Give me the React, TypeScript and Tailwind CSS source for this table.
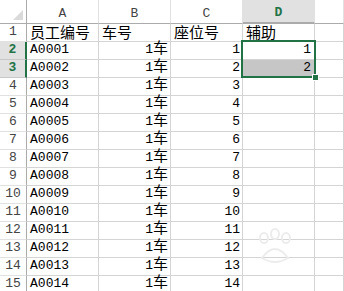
import React from 'react';

const rows = Array.from({ length: 15 }, (_, i) => ({
  id: `A${String(i + 1).padStart(4, '0')}`,
  car: '1车',
  seat: String(i + 1),
  aux: i === 0 ? '1' : i === 1 ? '2' : '',
}));

// latin glyphs in mono, CJK glyphs in Noto CJK
function Txt({ text }: { text: string }) {
  return (
    <span className="whitespace-nowrap leading-[16px]">
      {text.split('').map((ch, i) =>
        ch.charCodeAt(0) > 255 ? (
          <span key={i} className="font-['Noto_Sans_CJK_SC',sans-serif] text-[15px] leading-[16px]">
            {ch}
          </span>
        ) : (
          <span key={i} className="font-['Liberation_Mono',monospace] text-[13px] leading-[16px]">
            {ch}
          </span>
        )
      )}
    </span>
  );
}

const cell = 'flex items-end border-r border-b border-[#d4d4d4] pb-[1px] text-black';
const colHead = "flex items-end justify-center border-r border-b border-[#e1e1e1] border-b-[#ababab] pb-[3px] font-['Liberation_Mono',monospace] text-[13px] leading-none";

export default function App() {
  return (
    <div className="relative h-[291px] w-[344px] overflow-hidden bg-white">
      <div className="grid grid-cols-[27px_72px_72px_72px_72px_1fr] grid-rows-[24px] auto-rows-[18px]">
        {/* header row */}
        <div className="relative border-r border-b border-[#ababab]">
          <div className="absolute right-[3px] bottom-[3px] h-0 w-0 border-l-[10px] border-b-[10px] border-l-transparent border-b-[#dadada]" />
        </div>
        <div className={`${colHead} text-[#444]`}>A</div>
        <div className={`${colHead} text-[#444]`}>B</div>
        <div className={`${colHead} text-[#444]`}>C</div>
        <div className={`${colHead} border-b-2 border-b-[#217346] bg-[#e1e1e1] font-bold text-[#217346]`}>D</div>
        <div className={`${colHead} text-[#444]`} />

        {/* row 1 */}
        <div className="flex items-end justify-center border-r border-b border-[#ababab] border-b-[#e1e1e1] pb-[1px] font-['Liberation_Mono',monospace] text-[13px] leading-[16px] text-[#444]">
          1
        </div>
        <div className={`${cell} pl-[3px]`}><Txt text="员工编号" /></div>
        <div className={`${cell} pl-[3px]`}><Txt text="车号" /></div>
        <div className={`${cell} pl-[3px]`}><Txt text="座位号" /></div>
        <div className={`${cell} pl-[3px]`}><Txt text="辅助" /></div>
        <div className={cell} />

        {rows.map((r, i) => {
          const sel = i < 2;
          return (
            <React.Fragment key={r.id}>
              <div
                className={
                  sel
                    ? "flex items-end justify-center border-r-2 border-b border-r-[#217346] border-b-[#c8c8c8] bg-[#e1e1e1] pb-[1px] font-['Liberation_Mono',monospace] text-[13px] font-bold leading-[16px] text-[#217346]"
                    : "flex items-end justify-center border-r border-b border-[#ababab] border-b-[#e1e1e1] pb-[1px] font-['Liberation_Mono',monospace] text-[13px] leading-[16px] text-[#444]"
                }
              >
                {i + 2}
              </div>
              <div className={`${cell} pl-[3px]`}><Txt text={r.id} /></div>
              <div className={`${cell} justify-end pr-[2px]`}><Txt text={r.car} /></div>
              <div className={`${cell} justify-end pr-[2px]`}><Txt text={r.seat} /></div>
              <div className={`${cell} justify-end pr-[3px] ${i === 1 ? 'bg-[#c6c6c6]' : ''}`}>
                <Txt text={r.aux} />
              </div>
              <div className={cell} />
            </React.Fragment>
          );
        })}
      </div>

      {/* selection D2:D3 */}
      <div className="pointer-events-none absolute left-[241px] top-[40px] h-[38px] w-[75px] border-2 border-[#217346]" />
      <div className="pointer-events-none absolute left-[312px] top-[74px] h-[7px] w-[7px] border border-white bg-[#217346]" />

      {/* faint watermark paw */}
      <svg className="pointer-events-none absolute left-[250px] top-[228px]" width="50" height="40" viewBox="0 0 50 40">
        <g fill="none" stroke="#ececec" strokeWidth="2">
          <ellipse cx="14" cy="10" rx="4" ry="5" />
          <ellipse cx="25" cy="6" rx="4" ry="5" />
          <ellipse cx="36" cy="10" rx="4" ry="5" />
          <path d="M12 30 Q25 12 38 30 Q25 38 12 30 Z" />
        </g>
      </svg>
    </div>
  );
}
